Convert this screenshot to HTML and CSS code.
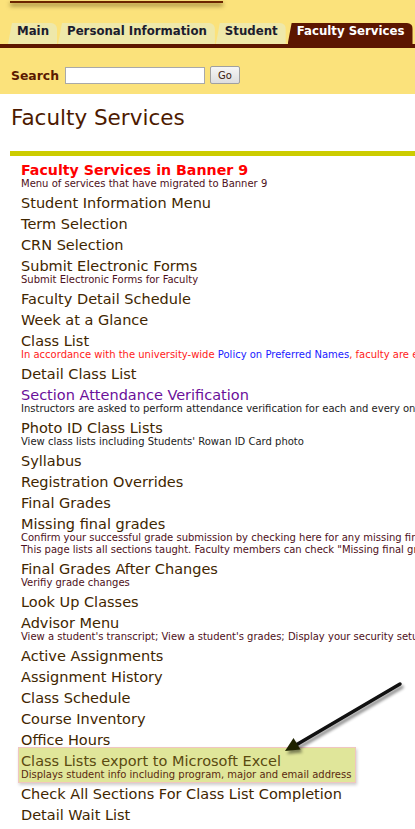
FILE: index.html
```
<!DOCTYPE html>
<html lang="en">
<head>
<meta charset="utf-8">
<title>Faculty Services</title>
<link rel="stylesheet" href="styles.css">
</head>
<body>
<div class="top">
  <div class="banner"></div>
  <nav class="tabs">
    <a class="tab" href="#">Main</a>
    <a class="tab" href="#">Personal Information</a>
    <a class="tab" href="#">Student</a>
    <a class="tab active" href="#">Faculty Services</a>
  </nav>
  <form class="search">
    <label class="search-label">Search</label>
    <input class="search-input" type="text">
    <button class="go" type="button">Go</button>
  </form>
</div>
<div class="content">
  <h1 class="title">Faculty Services</h1>
  <div class="rule"></div>
  <div class="menu">
    <div class="item"><a class="link red" href="#">Faculty Services in Banner 9</a><div class="desc">Menu of services that have migrated to Banner 9</div></div>
    <div class="item"><a class="link" href="#">Student Information Menu</a></div>
    <div class="item"><a class="link" href="#">Term Selection</a></div>
    <div class="item"><a class="link" href="#">CRN Selection</a></div>
    <div class="item"><a class="link" href="#">Submit Electronic Forms</a><div class="desc">Submit Electronic Forms for Faculty</div></div>
    <div class="item"><a class="link" href="#">Faculty Detail Schedule</a></div>
    <div class="item"><a class="link" href="#">Week at a Glance</a></div>
    <div class="item"><a class="link" href="#">Class List</a><div class="desc warn">In accordance with the university-wide <a class="blue" href="#">Policy on Preferred Names</a>, faculty are expected to use preferred names in class.</div></div>
    <div class="item"><a class="link" href="#">Detail Class List</a></div>
    <div class="item"><a class="link visited" href="#">Section Attendance Verification</a><div class="desc dark">Instructors are asked to perform attendance verification for each and every one of their sections.</div></div>
    <div class="item"><a class="link" href="#">Photo ID Class Lists</a><div class="desc dark">View class lists including Students' Rowan ID Card photo</div></div>
    <div class="item"><a class="link" href="#">Syllabus</a></div>
    <div class="item"><a class="link" href="#">Registration Overrides</a></div>
    <div class="item"><a class="link" href="#">Final Grades</a></div>
    <div class="item"><a class="link" href="#">Missing final grades</a><div class="desc">Confirm your successful grade submission by checking here for any missing final grades.</div><div class="desc">This page lists all sections taught. Faculty members can check "Missing final grades" for each section.</div></div>
    <div class="item"><a class="link" href="#">Final Grades After Changes</a><div class="desc">Verifiy grade changes</div></div>
    <div class="item"><a class="link" href="#">Look Up Classes</a></div>
    <div class="item"><a class="link" href="#">Advisor Menu</a><div class="desc">View a student's transcript; View a student's grades; Display your security setup</div></div>
    <div class="item"><a class="link" href="#">Active Assignments</a></div>
    <div class="item"><a class="link" href="#">Assignment History</a></div>
    <div class="item"><a class="link" href="#">Class Schedule</a></div>
    <div class="item"><a class="link" href="#">Course Inventory</a></div>
    <div class="item"><a class="link" href="#">Office Hours</a></div>
    <div class="item hl"><a class="link" href="#">Class Lists export to Microsoft Excel</a><div class="desc">Displays student info including program, major and email address</div></div>
    <div class="item"><a class="link" href="#">Check All Sections For Class List Completion</a></div>
    <div class="item"><a class="link" href="#">Detail Wait List</a></div>
  </div>
</div>
<svg class="arrow" width="415" height="829" viewBox="0 0 415 829">
  <defs>
    <filter id="blur" x="-20%" y="-20%" width="140%" height="140%"><feGaussianBlur stdDeviation="1.5"/></filter>
  </defs>
  <g filter="url(#blur)" opacity="0.45" transform="translate(2 3)">
    <line x1="400" y1="684" x2="296" y2="745" stroke="#000" stroke-width="3.5" stroke-linecap="round"/>
    <polygon points="285,751 293.5,738 300.5,749.5" fill="#000"/>
  </g>
  <line x1="400" y1="684" x2="296" y2="745" stroke="#111" stroke-width="3.5" stroke-linecap="round"/>
  <polygon points="285,751 293.5,738 300.5,749.5" fill="#1e2200"/>
</svg>
</body>
</html>
```
FILE: styles.css
```
html, body {
  margin: 0;
  padding: 0;
  background: #ffffff;
  font-family: "DejaVu Sans", Verdana, sans-serif;
  overflow: hidden;
}

.top {
  background: #fbe27b;
  height: 94px;
  overflow: hidden;
}

.banner {
  margin-left: 10px;
  width: 213px;
  height: 1px;
  background: #f6dc7a;
  border-bottom: 2px solid #6b2500;
  box-shadow: 0 3px 4px rgba(70, 50, 0, 0.55);
}

.tabs {
  display: flex;
  margin-top: 20px;
  padding-left: 8px;
  border-bottom: 4px solid #5c1600;
  white-space: nowrap;
}

.tab {
  display: block;
  flex-shrink: 0;
  height: 16px;
  padding: 0 8px 5px 9px;
  margin-right: 1px;
  line-height: 16px;
  font-size: 11.75px;
  font-weight: bold;
  color: #1c1c2e;
  text-decoration: none;
  background: #eee8aa;
  border-top-right-radius: 6px;
  border-top-left-radius: 3px;
  clip-path: polygon(4px 0, 100% 0, 100% 100%, 0 100%);
}

.tab.active {
  background: #5c1600;
  color: #ffffff;
  margin-left: 1px;
}

.search {
  display: flex;
  align-items: center;
  margin: 0;
  padding: 18px 0 10px 11px;
}

.search-label {
  font-size: 12.4px;
  font-weight: bold;
  color: #5a1a00;
  margin-right: 6px;
}

.search-input {
  box-sizing: border-box;
  width: 140px;
  height: 17px;
  margin: 0 5px 0 0;
  padding: 0;
  border: 1px solid #a9a9a9;
  background: #fff;
}

.go {
  box-sizing: border-box;
  width: 30px;
  height: 18px;
  padding: 0;
  margin: 0;
  font-family: "DejaVu Sans", Verdana, sans-serif;
  font-size: 10px;
  color: #3a1a10;
  border: 1px solid #a0a0a0;
  border-radius: 2px;
  background: linear-gradient(#f6f6f6, #dedede);
}

.content {
  padding-left: 10px;
}

.title {
  margin: 11px 0 0 0;
  padding-left: 1px;
  font-size: 21.5px;
  line-height: 26px;
  font-weight: normal;
  color: #4d1a00;
}

.rule {
  margin-top: 20px;
  height: 5px;
  background: #cccc00;
}

.menu {
  padding: 1px 0 0 11px;
  white-space: nowrap;
}

.item {
  padding-top: 5px;
}

.link {
  display: block;
  font-size: 14.5px;
  line-height: 16px;
  color: #3f2600;
  text-decoration: none;
}

.link.red {
  color: #ff0000;
  font-weight: bold;
  font-size: 14.2px;
}

.link.visited {
  color: #6a0f9a;
}

.desc {
  font-size: 10px;
  line-height: 12px;
  color: #4e1020;
}

.desc.dark {
  color: #222222;
}

.desc.warn {
  color: #ff1a1a;
}

.blue {
  color: #1a1aff;
  text-decoration: none;
}

.hl {
  width: fit-content;
  margin: -1px 0 -2px -3px;
  padding: 5px 4px 1px 2px;
  background: #e0e69a;
  border: 1px solid #f0c6c0;
  box-shadow: 1px 2px 3px rgba(0, 0, 0, 0.2);
}

.hl .link {
  color: #5a4a10;
}

.hl .desc {
  color: #5a2a10;
}

.arrow {
  position: absolute;
  left: 0;
  top: 0;
  pointer-events: none;
}
```
